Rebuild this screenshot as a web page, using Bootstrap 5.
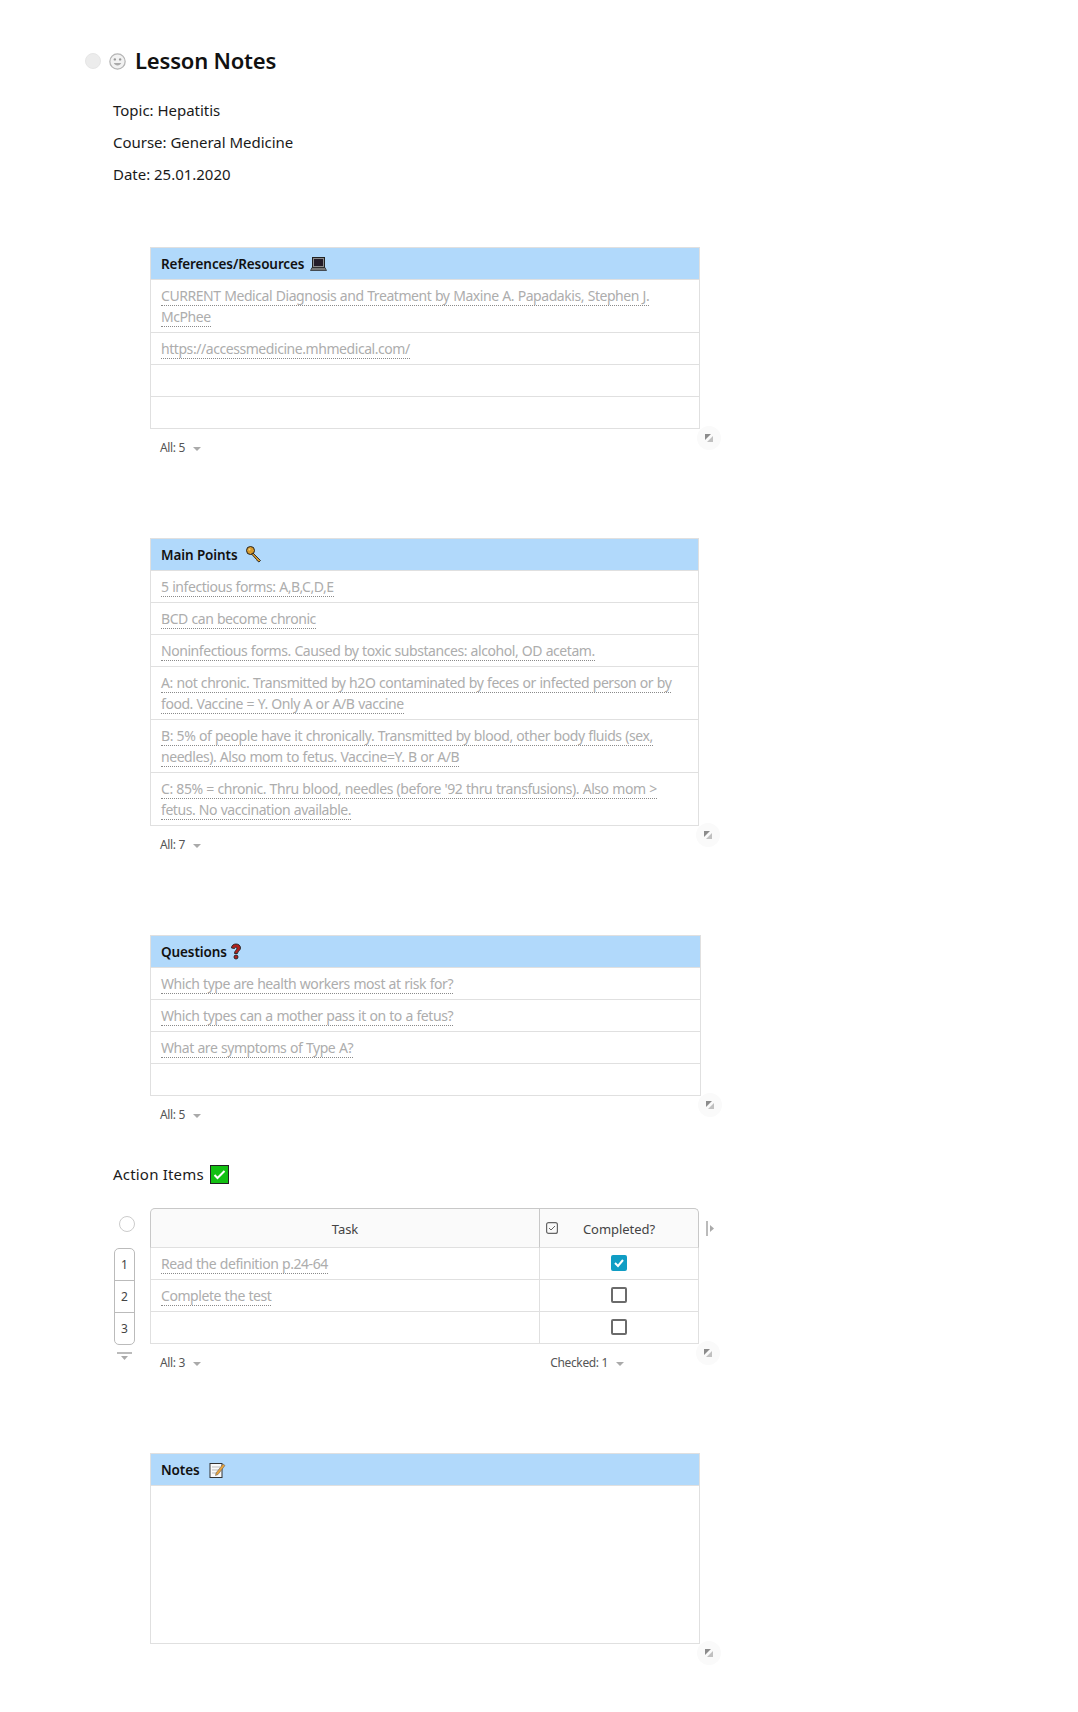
<!DOCTYPE html>
<html lang="en">
<head>
<meta charset="utf-8">
<title>Lesson Notes</title>
<link rel="stylesheet" href="https://cdn.jsdelivr.net/npm/bootstrap@5.3.0/dist/css/bootstrap.min.css">
<style>
body{font-family:"Noto Sans","Open Sans",sans-serif;color:#1a1a1a;background:#fff;font-size:15px;height:1712px;overflow:hidden}
.sheet{padding-top:48px;position:relative}
.doc-title{margin:0 0 0 85px;height:26px;gap:8px}
.doc-title h1{font-size:22px;font-weight:600;line-height:26px;margin:-2px 0 0 1px;letter-spacing:-.2px;color:#111}
.blank-dot{width:16px;height:16px;border-radius:50%;background:#ececec;border:1px solid #e6e6e6}
.meta{margin:25px 0 0 113px;line-height:22px;letter-spacing:-.02px}
.meta p{margin:0 0 10px}
.tbl-box{position:relative;margin-left:150px}
.w1{width:550px;margin-top:62px}
.w2{width:549px;margin-top:71px}
.w3{width:551px;margin-top:71px}
.w5{width:550px;margin-top:71px}
.grid-t{width:100%;margin:0;border-collapse:collapse;table-layout:fixed;font-size:14px;line-height:21px;letter-spacing:-.44px;word-spacing:.4px}
.grid-t th,.grid-t td{border:1px solid #e0e0e0;padding:5px 10px}
.grid-t th{padding:6px 10px 4px;vertical-align:middle}
.grid-t td{height:32px;color:#adadad}
.grid-t td.tall{height:158px}
.grid-t th.blue{background:#b1d9fb;font-weight:600;color:#111;height:32px;font-size:13.5px;letter-spacing:-.1px;word-spacing:0}
.ic-near{margin-left:2px}
.ic-note{margin-left:6px}
.dot-u{border-bottom:1px dotted #8a8a8a}
.foot-row{height:38px;padding-left:10px;font-size:12px;color:#555;letter-spacing:-.35px;gap:8px}
.tri{width:0;height:0;border-left:4px solid transparent;border-right:4px solid transparent;border-top:4px solid #aaa;margin-top:2px}
.resize-h{position:absolute;right:-21px;top:0;width:24px;height:24px;border-radius:50%;background:#fafafa;display:flex;align-items:center;justify-content:center}
.w1 .resize-h{top:179px}
.w2 .resize-h{top:285px}
.w3 .resize-h{top:158px}
.w5 .resize-h{top:188px}
.act-head{margin:28px 0 0 113px;height:24px;gap:6px;line-height:24px;letter-spacing:.2px}
.act-wrap{margin:22px 0 0 114px;position:relative;width:585px;gap:15px}
.gutter{width:21px;flex:none}
.gut-top{height:40px;display:flex;align-items:flex-start;justify-content:center;padding-top:8px}
.ring{width:16px;height:16px;border:1px solid #ccc;border-radius:50%;margin-left:5px}
.num-stack{border:1px solid #bbb;border-radius:5px;font-size:12px;text-align:center;color:#444}
.num-stack div{height:32px;line-height:31px;border-bottom:1px solid #bbb}
.num-stack div:last-child{border-bottom:0;height:31px}
.add-row{margin:-1px auto 0 2px;width:17px}
.act-main{flex:1;position:relative}
.act-t th{background:#fafafa;border-color:#c8c8c8 #c8c8c8 #e0e0e0;height:40px;text-align:center;font-weight:400;color:#444;font-size:13px;letter-spacing:-.05px;position:relative}
.act-t th:first-child{border-top-left-radius:5px}
.act-t td.mid{text-align:center;padding:0;vertical-align:middle}
.act-t{border-collapse:separate;border-spacing:0}
.act-t th,.act-t td{border-width:0 1px 1px 0}
.act-t th{border-top-width:1px}
.act-t th:first-child,.act-t td:first-child{border-left-width:1px}
.act-t th:last-child{border-top-right-radius:5px}
.cell-box{display:inline-block;width:16px;height:16px;border:2px solid #6b6b6b;border-radius:2px;vertical-align:middle;margin-top:-4px}
.cell-on{background:#109dc4;border-color:#109dc4;position:relative}
.head-check{position:absolute;left:6px;top:13px}
.add-col{position:absolute;right:-16px;top:13px}
.act-foot{justify-content:space-between;padding-right:75px}
.act-main .resize-h{top:133px}
</style>
</head>
<body>
<div class="sheet">
  <div class="doc-title d-flex align-items-center">
    <span class="blank-dot"></span>
    <svg width="17" height="17" viewBox="0 0 16 16"><circle cx="8" cy="8" r="7.2" fill="#f2f2f2" stroke="#b5b5b5" stroke-width="1.2"/><circle cx="5.5" cy="6" r="1.1" fill="#999"/><circle cx="10.5" cy="6" r="1.1" fill="#999"/><path d="M4.5 9.5c1 3 6 3 7 0z" fill="#aaa"/></svg>
    <h1>Lesson Notes</h1>
  </div>
  <div class="meta">
    <p>Topic: Hepatitis</p>
    <p>Course: General Medicine</p>
    <p>Date: 25.01.2020</p>
  </div>

  <div class="tbl-box w1">
    <table class="grid-t">
      <tr><th class="blue">References/Resources
        <svg class="ic-near" width="17" height="14" viewBox="0 0 17 14" style="vertical-align:-2px"><rect x="2.500" y=".5" width="12" height="10" fill="#8a8a8a" stroke="#222"/><rect x="4" y="2" width="9" height="7" fill="#241c28"/><path d="M2 10.500h13l1.500 3H.5z" fill="#777" stroke="#222" stroke-width=".7"/></svg></th></tr>
      <tr><td><span class="dot-u">CURRENT Medical Diagnosis and Treatment by Maxine A. Papadakis, Stephen J. McPhee</span></td></tr>
      <tr><td><span class="dot-u">https://accessmedicine.mhmedical.com/</span></td></tr>
      <tr><td></td></tr>
      <tr><td></td></tr>
    </table>
    <div class="foot-row d-flex align-items-center"><span>All: 5</span><span class="tri"></span></div>
    <div class="resize-h"><svg width="8" height="8" viewBox="0 0 8 8"><path d="M0 0h6L0 6z" fill="#8c8c8c"/><path d="M8 8H2l6-6z" fill="#c0c0c0"/></svg></div>
  </div>

  <div class="tbl-box w2">
    <table class="grid-t">
      <tr><th class="blue">Main Points
        <svg class="ms-1" width="18" height="18" viewBox="0 0 18 18" style="vertical-align:-3px"><circle cx="5.5" cy="5.500" r="4" fill="#d89a2c" stroke="#222" stroke-width="1"/><path d="M8 8l7.500 7.500-1.500 1.500-1.500-1-1-1.500L6.500 9z" fill="#d89a2c" stroke="#222" stroke-width=".9"/><circle cx="4.500" cy="4.500" r="1" fill="#f3d38a"/></svg></th></tr>
      <tr><td><span class="dot-u">5 infectious forms: A,B,C,D,E</span></td></tr>
      <tr><td><span class="dot-u">BCD can become chronic</span></td></tr>
      <tr><td><span class="dot-u">Noninfectious forms. Caused by toxic substances: alcohol, OD acetam.</span></td></tr>
      <tr><td><span class="dot-u">A: not chronic. Transmitted by h2O contaminated by feces or infected person or by food. Vaccine = Y. Only A or A/B vaccine</span></td></tr>
      <tr><td><span class="dot-u">B: 5% of people have it chronically. Transmitted by blood, other body fluids (sex, needles). Also mom to fetus. Vaccine=Y. B or A/B</span></td></tr>
      <tr><td><span class="dot-u">C: 85% = chronic. Thru blood, needles (before '92 thru transfusions). Also mom &gt; fetus. No vaccination available.</span></td></tr>
    </table>
    <div class="foot-row d-flex align-items-center"><span>All: 7</span><span class="tri"></span></div>
    <div class="resize-h"><svg width="8" height="8" viewBox="0 0 8 8"><path d="M0 0h6L0 6z" fill="#8c8c8c"/><path d="M8 8H2l6-6z" fill="#c0c0c0"/></svg></div>
  </div>

  <div class="tbl-box w3">
    <table class="grid-t">
      <tr><th class="blue">Questions
        <svg width="12" height="17" viewBox="0 0 12 17" style="vertical-align:-3px"><path d="M1.500 5C1.500 2.500 3.500 1 6 1s4.500 1.500 4.500 4c0 2.500-3 3-3 5.500h-3C4.500 7.500 7 7 7 5c0-1-2.500-1-2.500.5z" fill="#b3201c" stroke="#222" stroke-width=".9"/><circle cx="6" cy="14" r="2" fill="#b3201c" stroke="#222" stroke-width=".9"/></svg></th></tr>
      <tr><td><span class="dot-u">Which type are health workers most at risk for?</span></td></tr>
      <tr><td><span class="dot-u">Which types can a mother pass it on to a fetus?</span></td></tr>
      <tr><td><span class="dot-u">What are symptoms of Type A?</span></td></tr>
      <tr><td></td></tr>
    </table>
    <div class="foot-row d-flex align-items-center"><span>All: 5</span><span class="tri"></span></div>
    <div class="resize-h"><svg width="8" height="8" viewBox="0 0 8 8"><path d="M0 0h6L0 6z" fill="#8c8c8c"/><path d="M8 8H2l6-6z" fill="#c0c0c0"/></svg></div>
  </div>

  <div class="act-head d-flex align-items-center">
    <span>Action Items</span>
    <svg width="19" height="19" viewBox="0 0 19 19"><rect x=".5" y=".5" width="18" height="18" fill="#12c012" stroke="#222"/><path d="M4.500 10l3 3 7-7" fill="none" stroke="#fff" stroke-width="2"/></svg>
  </div>

  <div class="act-wrap d-flex">
    <div class="gutter">
      <div class="gut-top"><span class="ring"></span></div>
      <div class="num-stack"><div>1</div><div>2</div><div>3</div></div>
      <div class="add-row"><svg width="17" height="9" viewBox="0 0 17 9"><rect x="1" y="0" width="15" height="2" fill="#bbb"/><path d="M5 4h7l-3.500 4z" fill="#aaa"/></svg></div>
    </div>
    <div class="act-main">
      <table class="grid-t act-t">
        <colgroup><col style="width:390px"><col></colgroup>
        <tr><th>Task</th><th><svg class="head-check" width="12" height="12" viewBox="0 0 12 12"><rect x=".6" y=".6" width="10.800" height="10.800" rx="2" fill="none" stroke="#666" stroke-width="1.200"/><path d="M3 6l2 2 4-4" fill="none" stroke="#666"/></svg><span>Completed?</span></th></tr>
        <tr><td><span class="dot-u">Read the definition p.24-64</span></td><td class="mid"><span class="cell-box cell-on"><svg class="d-block" width="12" height="12" viewBox="0 0 12 12"><path d="M2 6l3 3 5-6" fill="none" stroke="#fff" stroke-width="2"/></svg></span></td></tr>
        <tr><td><span class="dot-u">Complete the test</span></td><td class="mid"><span class="cell-box"></span></td></tr>
        <tr><td></td><td class="mid"><span class="cell-box"></span></td></tr>
      </table>
      <div class="foot-row act-foot d-flex align-items-center">
        <span class="d-flex align-items-center gap-2"><span>All: 3</span><span class="tri"></span></span>
        <span class="d-flex align-items-center gap-2"><span>Checked: 1</span><span class="tri"></span></span>
      </div>
      <svg class="add-col" width="9" height="15" viewBox="0 0 9 15"><rect x="0" y="0" width="2" height="15" fill="#bbb"/><path d="M4 4v7l4-3.500z" fill="#aaa"/></svg>
      <div class="resize-h"><svg width="8" height="8" viewBox="0 0 8 8"><path d="M0 0h6L0 6z" fill="#8c8c8c"/><path d="M8 8H2l6-6z" fill="#c0c0c0"/></svg></div>
    </div>
  </div>

  <div class="tbl-box w5">
    <table class="grid-t">
      <tr><th class="blue">Notes
        <svg class="ic-note" width="17" height="16" viewBox="0 0 17 16" style="vertical-align:-3px"><rect x="1" y="1.500" width="12" height="14" fill="#fafafa" stroke="#333"/><path d="M3 5h8M3 8h8M3 11h6" stroke="#bbb"/><path d="M7 11l7-9 2 1.500-7 9-2.500 1z" fill="#e8a33c" stroke="#555" stroke-width=".5"/></svg></th></tr>
      <tr><td class="tall"></td></tr>
    </table>
    <div class="resize-h"><svg width="8" height="8" viewBox="0 0 8 8"><path d="M0 0h6L0 6z" fill="#8c8c8c"/><path d="M8 8H2l6-6z" fill="#c0c0c0"/></svg></div>
  </div>
</div>
<script src="https://cdn.jsdelivr.net/npm/bootstrap@5.3.0/dist/js/bootstrap.bundle.min.js"></script>
</body>
</html>
